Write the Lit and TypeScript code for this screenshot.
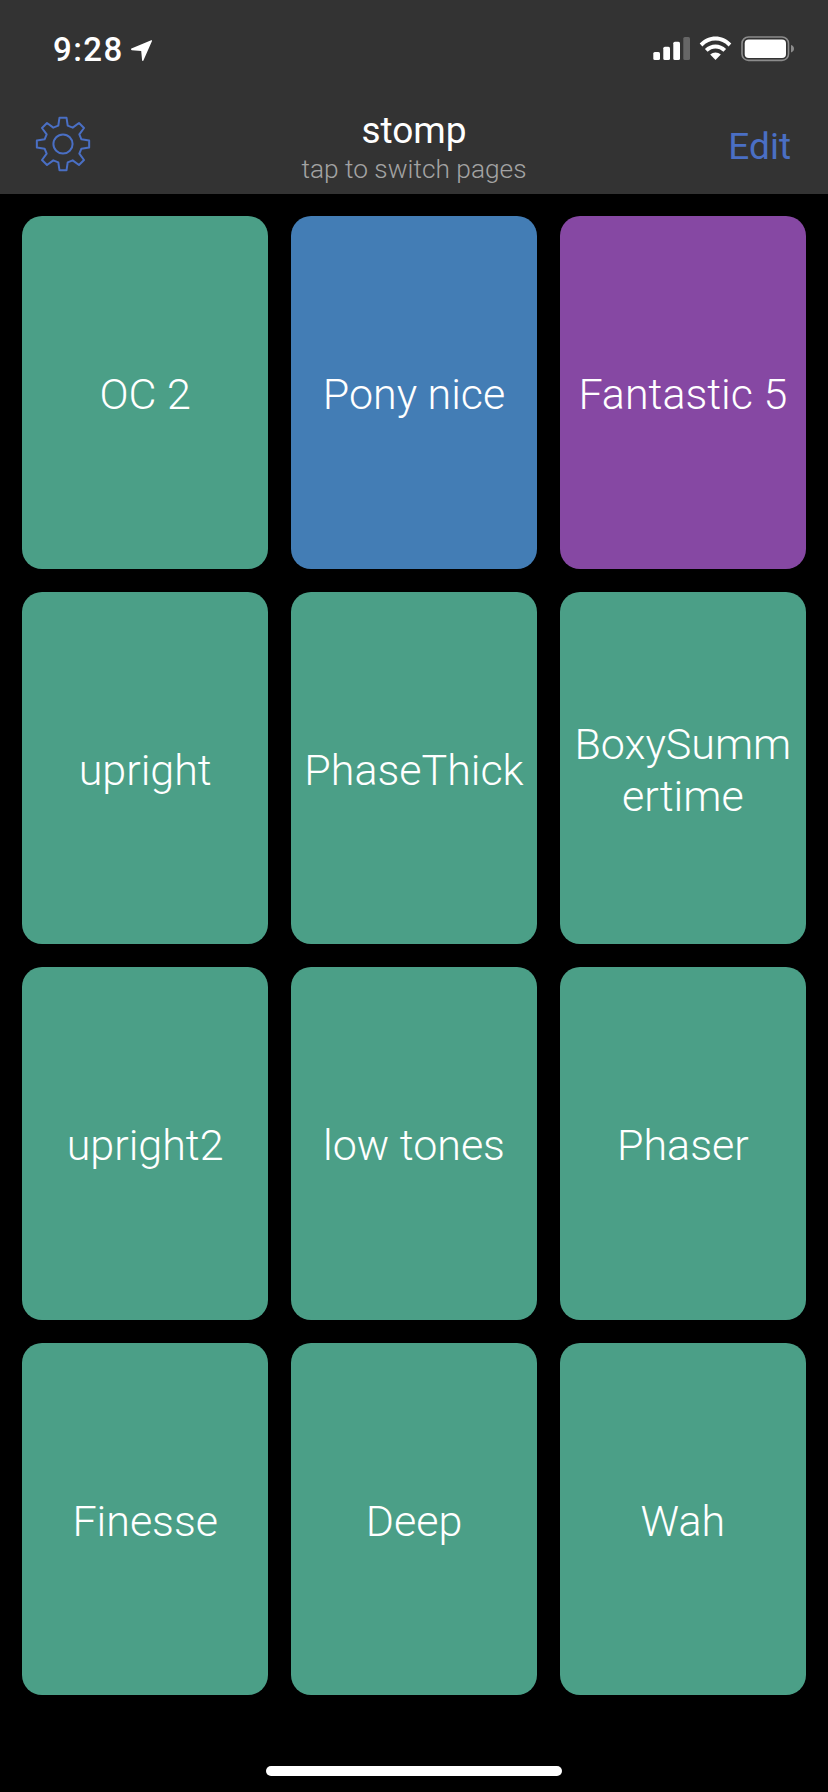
import { LitElement, html, css, svg } from 'lit';
import { customElement } from 'lit/decorators.js';

const GREEN = '#4b9f87';

const pads = [
  { name: 'OC 2', color: GREEN },
  { name: 'Pony nice', color: '#437db5' },
  { name: 'Fantastic 5', color: '#8648a3' },
  { name: 'upright', color: GREEN },
  { name: 'PhaseThick', color: GREEN },
  { name: 'BoxySummertime', color: GREEN },
  { name: 'upright2', color: GREEN },
  { name: 'low tones', color: GREEN },
  { name: 'Phaser', color: GREEN },
  { name: 'Finesse', color: GREEN },
  { name: 'Deep', color: GREEN },
  { name: 'Wah', color: GREEN },
];

// 8 trapezoid teeth around a centre at 28,28
function gearPath() {
  const pts: string[] = [];
  const pt = (r: number, a: number) =>
    `${(28 + r * Math.sin(a)).toFixed(2)} ${(28 - r * Math.cos(a)).toFixed(2)}`;
  for (let i = 0; i < 8; i++) {
    const a = (i * Math.PI) / 4;
    pts.push(pt(19, a - 0.25), pt(26.4, a - 0.135), pt(26.4, a + 0.135), pt(19, a + 0.25));
  }
  return `M${pts.join('L')}Z`;
}

@customElement('app-root')
export class AppRoot extends LitElement {
  static styles = css`
    :host {
      display: block;
      width: 828px;
      height: 1792px;
      background: #000;
      font-family: 'Roboto', 'Liberation Sans', sans-serif;
      overflow: hidden;
    }

    .top {
      height: 194px;
      background: #333;
      box-sizing: border-box;
      display: flex;
      flex-direction: column;
    }

    .status {
      height: 88px;
      box-sizing: border-box;
      padding: 33px 34px 0 53px;
      display: flex;
      justify-content: space-between;
      align-items: flex-start;
    }

    .clock {
      display: flex;
      align-items: center;
      gap: 7px;
      height: 32px;
      color: #fff;
      font-size: 33px;
      font-weight: 500;
      letter-spacing: 1.4px;
    }

    .clock svg {
      margin-top: 3px;
    }

    .indicators {
      display: flex;
      align-items: center;
      margin-top: 3px;
    }

    .nav {
      flex: 1;
      display: grid;
      grid-template-columns: 1fr auto 1fr;
      align-items: start;
      padding: 0 36px;
    }

    .gear {
      display: block;
      margin: 28px 0 0 -1px;
    }

    .title {
      text-align: center;
      margin-top: 22px;
    }

    .title .main {
      color: #fff;
      font-size: 37px;
      line-height: 42px;
      font-weight: 400;
    }

    .title .sub {
      color: #a3a3a3;
      font-size: 26.3px;
      line-height: 30px;
      font-weight: 300;
      margin-top: 2px;
    }

    .edit {
      justify-self: end;
      color: #4a6fc4;
      font-size: 37px;
      line-height: 42px;
      font-weight: 400;
      margin: 38px 1px 0 0;
    }

    .pads {
      display: grid;
      grid-template-columns: repeat(3, 1fr);
      grid-auto-rows: 352.5px;
      gap: 23px 22.5px;
      padding: 22px 22px 0;
    }

    .pad {
      border-radius: 20px;
      display: flex;
      align-items: center;
      justify-content: center;
      text-align: center;
      box-sizing: border-box;
      padding: 6px 12px 0;
      color: #fff;
      font-size: 43px;
      line-height: 51.6px;
      font-weight: 300;
      overflow-wrap: anywhere;
    }

    .home {
      width: 296px;
      height: 10px;
      border-radius: 5px;
      background: #fff;
      margin: 71px auto 0;
    }
  `;

  renderIndicators() {
    return html`
      <svg width="142" height="26" viewBox="0 0 142 26">
        <rect x="1.3" y="16" width="6.7" height="8" rx="1.6" fill="#fff"></rect>
        <rect x="11.3" y="10.7" width="6.7" height="13.3" rx="1.6" fill="#fff"></rect>
        <rect x="21.3" y="5.7" width="6.7" height="18.3" rx="1.6" fill="#fff"></rect>
        <rect x="31.3" y="1" width="6.7" height="23" rx="1.6" fill="#666"></rect>
        ${svg`
          <g fill="#fff">
            <path d="M47.7 7.6 C56.4 -1.9 70.6 -1.9 79.3 7.6 L76.6 10.4 C69.4 2.6 57.6 2.6 50.4 10.4 Z"></path>
            <path d="M52.9 13 C58.7 6.9 68.3 6.9 74.1 13 L71.4 15.8 C67 11.3 60 11.3 55.6 15.8 Z"></path>
            <path d="M58.2 18.5 C61.2 15.7 65.8 15.7 68.8 18.5 L63.5 24 Z"></path>
          </g>
          <rect x="90" y="1" width="46.5" height="23.4" rx="6.5" fill="none" stroke="#8c8c8c" stroke-width="1.6"></rect>
          <rect x="92.7" y="3.4" width="41.3" height="18.6" rx="4" fill="#fff"></rect>
          <path d="M139 9 C141 9.6 142 11 142 12.7 C142 14.4 141 15.8 139 16.4 Z" fill="#8c8c8c"></path>
        `}
      </svg>
    `;
  }

  render() {
    return html`
      <div class="top">
        <div class="status">
          <div class="clock">
            <span>9:28</span>
            <svg width="21" height="21" viewBox="0 0 21 21">
              <path d="M0.4 8.6 L20.2 0.3 C20.9 0 21.3 0.5 21 1.1 L12.4 20.4 C12 21.2 11.2 21 11.1 20.2 L10.2 11 L0.8 10.2 C-0.2 10 -0.3 9 0.4 8.6 Z" fill="#fff"></path>
            </svg>
          </div>
          <div class="indicators">${this.renderIndicators()}</div>
        </div>
        <div class="nav">
          <svg class="gear" width="56" height="56" viewBox="0 0 56 56" fill="none" stroke="#4a6fc4" stroke-width="2">
            <path d=${gearPath()} stroke-linejoin="round"></path>
            <circle cx="28" cy="28" r="9.6"></circle>
          </svg>
          <div class="title">
            <div class="main">stomp</div>
            <div class="sub">tap to switch pages</div>
          </div>
          <div class="edit">Edit</div>
        </div>
      </div>
      <div class="pads">
        ${pads.map((p) => html`<div class="pad" style="background:${p.color}">${p.name}</div>`)}
      </div>
      <div class="home"></div>
    `;
  }
}
